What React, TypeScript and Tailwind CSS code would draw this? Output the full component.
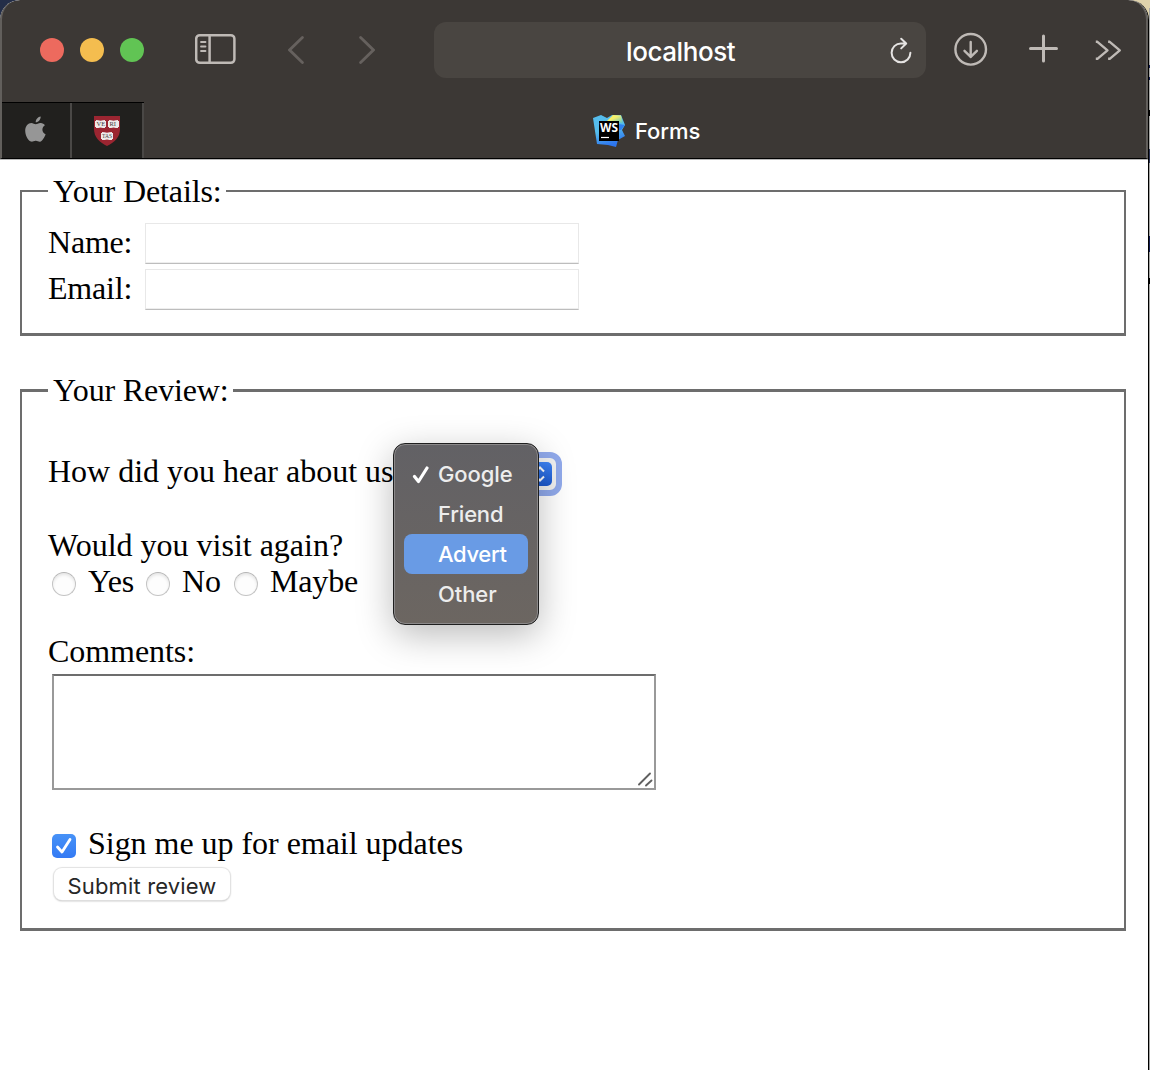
import type { ReactNode } from "react";

function SidebarIcon() {
  return (
    <svg className="ml-[51px] h-8 w-[42px] shrink-0" viewBox="0 0 42 32" fill="none" stroke="#bfbab6" strokeWidth="2.5">
      <rect x="1.2" y="2.2" width="38.2" height="27.6" rx="3.6" />
      <path d="M14.6 2v28" />
      <path d="M6 9h4.500M6 13.500h4.500M6 18h4.500" strokeWidth="1.8" strokeLinecap="round" />
    </svg>
  );
}

function Toolbar() {
  return (
    <div className="flex h-[102px] items-start pl-[38px]">
      <div className="flex h-[100px] items-center gap-4">
        <span className="size-6 rounded-full bg-[#ed6a5e]" />
        <span className="size-6 rounded-full bg-[#f4bd4f]" />
        <span className="size-6 rounded-full bg-[#61c454]" />
      </div>
      <div className="flex h-[98px] items-center">
        <SidebarIcon />
      </div>
      <div className="flex h-[100px] items-center">
        <svg className="ml-[51px] h-7 w-4" viewBox="0 0 16 28" fill="none" stroke="#66615e" strokeWidth="2.8" strokeLinecap="round">
          <path d="M14.4 1.5 1.6 14l12.8 12.5" />
        </svg>
        <svg className="ml-[55px] h-7 w-4" viewBox="0 0 16 28" fill="none" stroke="#66615e" strokeWidth="2.8" strokeLinecap="round">
          <path d="M1.6 1.5 14.4 14 1.6 26.5" />
        </svg>
      </div>
      <div className="mt-[22px] ml-[59px] flex h-14 w-[492px] items-center rounded-xl bg-[#494541] pl-[192px]">
        <span className="mt-1 w-[110px] text-[26px] leading-8 font-medium tracking-[-0.42px] whitespace-nowrap text-white">localhost</span>
        <svg className="mt-px ml-[154px] h-7 w-6 shrink-0" viewBox="0 0 24 28" fill="none" stroke="#e5e3e2" strokeWidth="2" strokeLinecap="round" strokeLinejoin="round">
          <path d="M20.4 15.8A9.4 9.4 0 1 1 11 6.4h5M11.2 1.8l5 4.7-5 4.9" />
        </svg>
      </div>
      <svg className="mt-8 ml-7 size-[34px]" viewBox="0 0 34 34" fill="none" stroke="#bfbab6" strokeWidth="2.4" strokeLinecap="round" strokeLinejoin="round">
        <circle cx="16.7" cy="17.3" r="15.3" />
        <path d="M16.7 10v15M10.5 18.8l6.2 6.1 6.2-6.1" />
      </svg>
      <svg className="mt-[34px] ml-[41px] size-[29px]" viewBox="0 0 29 29" fill="none" stroke="#bfbab6" strokeWidth="3" strokeLinecap="round">
        <path d="M14.5 2v25M1.5 14.5h26" />
      </svg>
      <svg className="mt-10 ml-[37px] h-5 w-[27px]" viewBox="0 0 27 20" fill="none" stroke="#bfbab6" strokeWidth="2.4" strokeLinejoin="round">
        <path d="M.8 1.8h1.6L12.5 10.300 2.4 18.800H.8M13.1 1.8h1.6l10.1 8.500-10.1 8.500h-1.6" />
      </svg>
    </div>
  );
}

function AppleIcon() {
  return (
    <svg className="mb-[2px] h-[27px] w-[21px]" viewBox="0 0 21 27" fill="#969696">
      <path d="M15.7.5c.2 2.7-2.400 5.900-5 5.800C10.500 3.700 13 .7 15.700.5Z" />
      <path d="M10.700 8.300c1.300 0 2.900-1.500 5.100-1.300 1.700.1 3.200.9 4.100 2.300-3.700 2.300-3.100 7.300.7 8.900-.8 2.200-2.700 6.200-4.900 7.300-1.900.8-3.100-.9-5.100-.7-1.900 0-3 1.400-4.700.8C2.700 24.300.2 19 .2 14.800.3 9.900 3.200 7 6.300 7c1.800 0 3.200 1.300 4.400 1.300Z" />
    </svg>
  );
}

function ShieldIcon() {
  return (
    <svg className="mt-px h-[31px] w-[26px]" viewBox="0 0 26 31">
      <path d="M0 0h26v13c0 8-5 13-13 17C5 26 0 21 0 13Z" fill="#9b2531" />
      <path d="M2 4q2 0 4.500.8Q9 4 11 4v1h1v6h-1v1q-2 0-4.500-.6Q4 12 2 12v-1H1V5h1ZM15 4q2 0 4.500.8Q22 4 24 4v1h1v6h-1v1q-2 0-4.500-.6Q17 12 15 12v-1h-1V5h1ZM8 16q2.500 0 5 .8 2.500-.8 5-.8v1h1v6h-1v1q-2.500 0-5-.6-2.500.6-5 .6v-1H7v-6h1Z" fill="#eeeae9" />
      <g fill="#443b3e" fontFamily="Liberation Serif, serif" fontSize="6.500">
        <text x="2.500" y="10.300">VE</text>
        <text x="15.500" y="10.300">RI</text>
        <text x="8" y="22.300" textLength="10" lengthAdjust="spacingAndGlyphs">TAS</text>
      </g>
    </svg>
  );
}

function WebStormIcon() {
  return (
    <svg className="size-8 shrink-0" viewBox="0 0 32 32">
      <defs>
        <linearGradient id="blue" x1="0" y1="0" x2="0.3" y2="1">
          <stop offset=".55" stopColor="#55bcec" />
          <stop offset="1" stopColor="#2d76ef" />
        </linearGradient>
        <linearGradient id="lime" x1="0" y1="0" x2="1" y2="1">
          <stop offset=".4" stopColor="#f6f16b" />
          <stop offset="1" stopColor="#54c3cf" />
        </linearGradient>
      </defs>
      <path d="M0 3 8 0l6 3 5-3h9l4 10-3 5 3 6-7 4-2 7-8-2-11-1Z" fill="url(#blue)" />
      <path d="m20 0 8 .5L30 8l-8-1-8-1Z" fill="url(#lime)" />
      <path d="m26 9 6 1-4 5h-2Z" fill="#2d80ed" />
      <rect x="6" y="6" width="20" height="20" />
      <text x="7" y="17" fill="white" fontFamily="Open Sans, sans-serif" fontSize="12" fontWeight="700" textLength="18" lengthAdjust="spacingAndGlyphs">WS</text>
      <path d="M8 22.500h8" stroke="white" strokeWidth="1.200" />
    </svg>
  );
}

function TabBar() {
  return (
    <div className="flex h-[56px]">
      <div className="flex h-[56px] w-[142px] border-t border-black bg-[#21201e]">
        <div className="flex w-[70px] items-center justify-center border-r-2 border-[#4a4846] pr-0.5">
          <AppleIcon />
        </div>
        <div className="flex w-[72px] items-center justify-center border-r-2 border-[#4a4846]">
          <ShieldIcon />
        </div>
      </div>
      <div className="flex flex-1 items-start pt-[13px] pl-[449px]">
        <WebStormIcon />
        <span className="ml-[10px] text-[22px] leading-8 font-medium tracking-[-0.05px] text-white">Forms</span>
      </div>
    </div>
  );
}

function Field({ label, children }: { label: string; children?: ReactNode }) {
  return (
    <label className="flex h-[46px] items-start">
      <span className="w-[97px] pt-px leading-9 tracking-[-0.2px]">{label}</span>
      <input type="text" className="h-[41px] w-[434px] border border-[#e8e8e8] border-b-[#bdbdbd] shadow-[inset_0_-1px_0_#eee]" />
      {children}
    </label>
  );
}

function Radio({ label, width }: { label: string; width: string }) {
  return (
    <label className={`flex h-9 items-start ${width}`}>
      <span className="mt-[9px] size-6 shrink-0 rounded-full border border-[#c4c4c4] border-t-[#b4b4b4] bg-[#fdfdfd] shadow-[inset_0_2px_3px_#e6e6e6]" />
      <span className="ml-3 tracking-[-0.15px]">{label}</span>
    </label>
  );
}

function Menu() {
  return (
    <div className="absolute top-[443px] left-[393px] h-[182px] w-[146px] rounded-xl border border-[#1f1f1f] bg-linear-to-b from-[#626165] to-[#6c6661] pt-[10px] font-[Inter,sans-serif] text-[22px] font-medium tracking-[-0.1px] text-[#ededed] shadow-[inset_0_0_0_1px_#8b898a,0_10px_36px_rgba(0,0,0,0.27)]">
      <div className="mx-[10px] flex h-10 items-center">
        <svg className="mt-px ml-[8px] h-[18px] w-[18px]" viewBox="0 0 18 18" fill="none" stroke="white" strokeWidth="3.2" strokeLinecap="round" strokeLinejoin="round">
          <path d="m2.500 10.500 4 5L15 2" />
        </svg>
        <span className="ml-[8px]">Google</span>
      </div>
      <div className="mx-[10px] flex h-10 items-center pl-[34px] tracking-[-0.2px]">Friend</div>
      <div className="mx-[10px] flex h-10 items-center rounded-lg bg-[#699be5] pl-[34px] tracking-[-0.35px] text-white">Advert</div>
      <div className="mx-[10px] flex h-10 items-center pl-[34px]">Other</div>
    </div>
  );
}

export default function App() {
  return (
    <div className="relative flex h-[1070px] w-[1150px] overflow-hidden bg-linear-to-r from-[#242e48] from-50% to-[#dfd2ac] to-50%">
      <div className="flex w-[1149px] flex-col overflow-hidden rounded-t-[20px] border-r border-black bg-white">
        <div className="h-[160px] rounded-t-[20px] border-b border-[#b8b8b8] bg-[#3c3835] font-[Inter,sans-serif]">
          <div className="h-[159px] rounded-t-[20px] border-x-2 border-b border-x-[#625f5c] border-b-black">
            <Toolbar />
            <TabBar />
          </div>
        </div>
        <main className="pt-[13px] pl-5 font-['Liberation_Serif',serif] text-[32px] leading-9 text-black">
          <fieldset className="h-[163px] w-[1106px] border-2 border-b-[3px] border-[#6d6d6d] pl-[26px]">
            <legend className="h-9 pr-1 pl-[5px] tracking-[-0.12px]">Your Details:</legend>
            <div className="pt-[14px]">
              <Field label="Name:" />
              <Field label="Email:" />
            </div>
          </fieldset>
          <fieldset className="mt-9 h-[559px] w-[1106px] border-2 border-t-[3px] border-b-[3px] border-[#6d6d6d] pl-[26px]">
            <legend className="h-9 pr-1 pl-[5px] tracking-[-0.14px]">Your Review:</legend>
            <div className="mt-[45px] flex h-[74px] items-start">
              <span className="w-[345px] tracking-[-0.01px] whitespace-nowrap">How did you hear about us?</span>
              <div className="-mt-px flex h-11 w-[169px] items-center justify-end rounded-xl border-[6px] border-[#91aaec] bg-[#f2f2f2] pr-1">
                <span className="flex h-6 w-6 items-center justify-center rounded-[5px] bg-linear-to-b from-[#3d83f6] to-[#1c58cd]">
                  <svg className="h-4 w-[10px]" viewBox="0 0 10 16" fill="none" stroke="white" strokeWidth="2">
                    <path d="m1 5.500 4-4 4 4m-8 5 4 4 4-4" />
                  </svg>
                </span>
              </div>
            </div>
            <div className="h-9">Would you visit again?</div>
            <div className="flex h-[70px] pl-1">
              <Radio label="Yes" width="w-[94px]" />
              <Radio label="No" width="w-[88px]" />
              <Radio label="Maybe" width="w-[130px]" />
            </div>
            <div className="h-[41px] tracking-[-0.05px]">Comments:</div>
            <div className="ml-1 flex h-[116px] w-[604px] items-end justify-end border-2 border-[#999] border-t-[#6d6d6d]">
              <svg className="size-[17px]" viewBox="0 0 17 17" fill="none" stroke="#606060" strokeWidth="1.900" strokeLinecap="round">
                <path d="M2 13.500 13 2.500M9 14.500 14.500 9.500" />
              </svg>
            </div>
            <label className="mt-[35px] flex h-[43px] items-start pl-1">
              <span className="mt-[9px] flex size-6 items-center justify-center rounded-[5px] bg-linear-to-b from-[#4792f7] to-[#347af4]">
                <svg className="size-[18px]" viewBox="0 0 18 18" fill="none" stroke="white" strokeWidth="2.800" strokeLinecap="round" strokeLinejoin="round">
                  <path d="m2.500 10 4.500 5L15 2.500" />
                </svg>
              </span>
              <span className="ml-3 tracking-[-0.03px]">Sign me up for email updates</span>
            </label>
            <button className="ml-[6px] flex h-8 w-[176px] items-center justify-center rounded-lg bg-white pt-[3px] font-[Inter,sans-serif] text-[22px] leading-8 tracking-[0.150px] text-[#272727] shadow-[0_0_1px_1px_#e1e1e1,0_1px_2px_#aaa]">Submit review</button>
          </fieldset>
        </main>
      </div>
      <div className="flex w-px flex-col bg-[#a7a7a5]">
        <span className="h-2 bg-[#dfd2ac]" />
        <span className="mt-[57px] h-[3px] bg-[#111b50]" />
        <span className="mt-[9px] h-[3px] bg-[#111b50]" />
        <span className="mt-[30px] h-[6px] bg-black" />
        <span className="mt-[33px] h-[14px] bg-[#293151]" />
        <span className="mt-[73px] h-[16px] bg-[#111b50]" />
        <span className="mt-[26px] h-[6px] bg-black" />
        <span className="flex-1" />
      </div>
      <Menu />
    </div>
  );
}
